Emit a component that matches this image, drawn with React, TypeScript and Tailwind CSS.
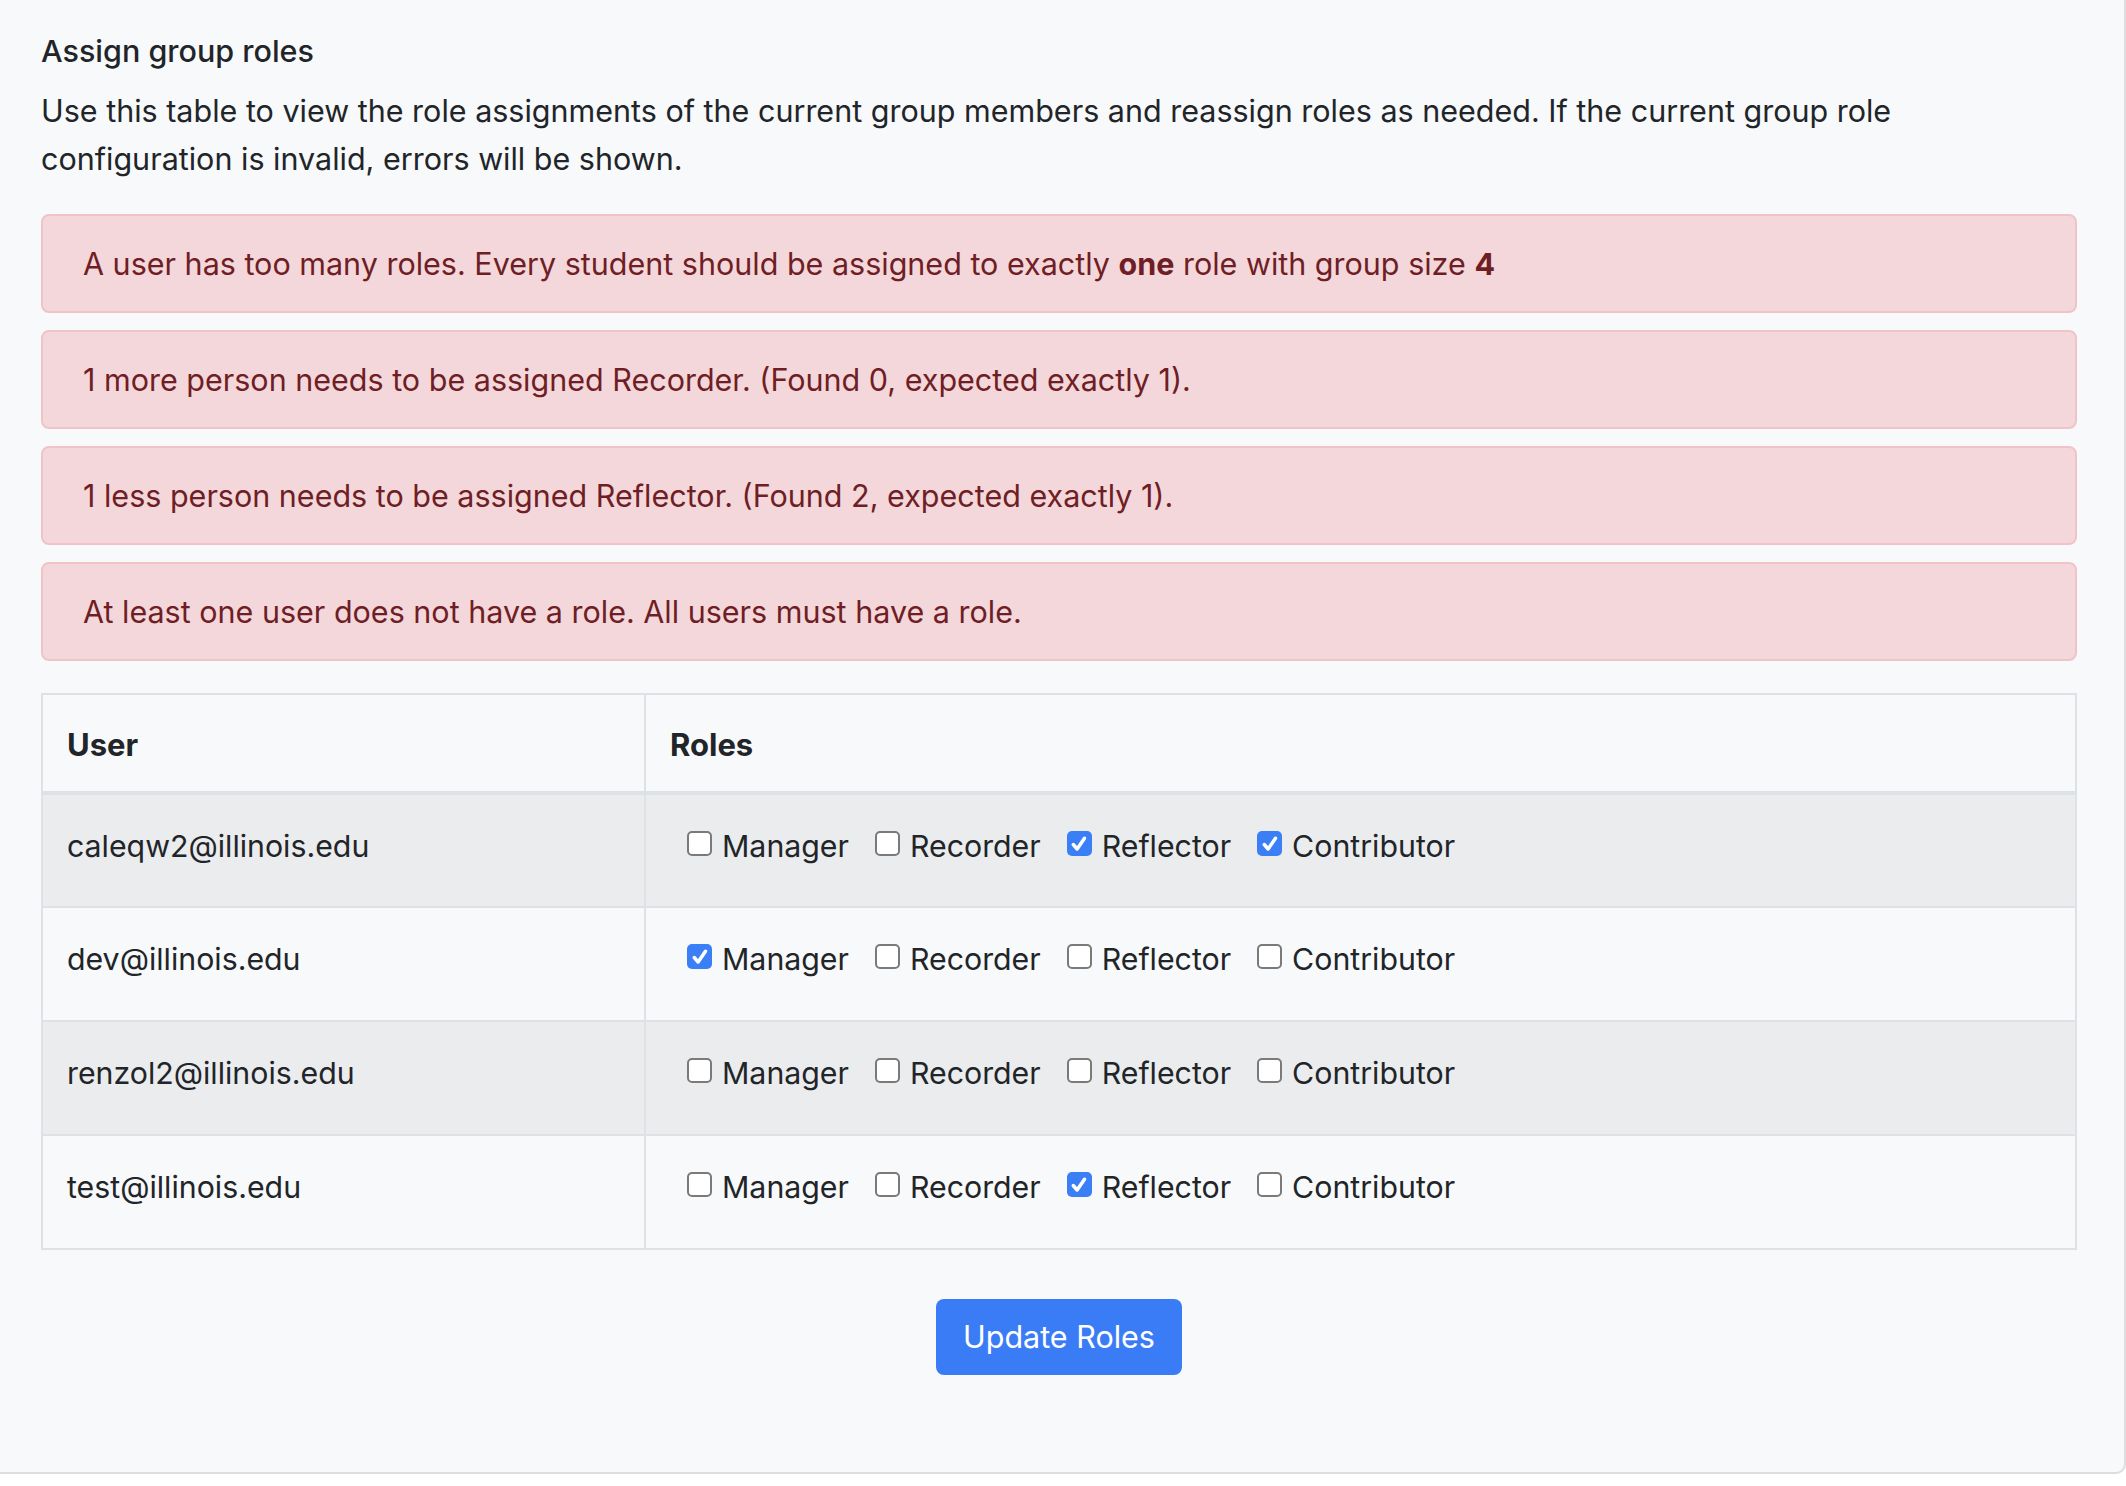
import React from "react";

const roles = ["Manager", "Recorder", "Reflector", "Contributor"];

const rows: { email: string; checked: boolean[] }[] = [
  { email: "caleqw2@illinois.edu", checked: [false, false, true, true] },
  { email: "dev@illinois.edu", checked: [true, false, false, false] },
  { email: "renzol2@illinois.edu", checked: [false, false, false, false] },
  { email: "test@illinois.edu", checked: [false, false, true, false] },
];

function Box({ checked }: { checked: boolean }) {
  if (checked) {
    return (
      <span className="mb-[5px] flex h-[25px] w-[25px] shrink-0 items-center justify-center rounded-[5px] bg-[#3a7ff6]">
        <svg width="20" height="20" viewBox="0 0 16 16" fill="none">
          <path d="M3.4 8.4 L6.5 12 L12.4 3.4" stroke="white" strokeWidth="2.8" strokeLinecap="round" strokeLinejoin="round" />
        </svg>
      </span>
    );
  }
  return (
    <span className="mb-[5px] block h-[25px] w-[25px] shrink-0 rounded-[5px] border-2 border-[#7a7a7a] bg-white" />
  );
}

function Alert({ children }: { children: React.ReactNode }) {
  return (
    <div className="flex h-[99px] items-center rounded-[8px] border-2 border-[#efc3c8] bg-[#f4d7da] pl-[40px] text-[#6f1e25]">
      {children}
    </div>
  );
}

export default function App() {
  return (
    <div
      className="min-h-[1486px] w-[2126px] bg-white text-[#212529]"
      style={{ fontFamily: "Inter, 'Noto Sans', sans-serif" }}
    >
      <div className="h-[1474px] w-[2126px] rounded-br-[10px] border-r-2 border-b-2 border-[#dcdde0] bg-[#f8f9fa] pl-[41px] pr-[47px] pt-[27px] text-[30.5px]">
        <div className="text-[30.5px] leading-[48px] font-medium">Assign group roles</div>
        <p className="mt-[12px] leading-[48px]">
          Use this table to view the role assignments of the current group members and reassign roles as needed. If the current group role
          <br />
          configuration is invalid, errors will be shown.
        </p>

        <div className="mt-[31px] flex flex-col gap-[17px] leading-[48px]">
          <Alert>
            <span>
              A user has too many roles. Every student should be assigned to exactly <b className="font-bold">one</b> role with group size{" "}
              <b className="font-bold">4</b>
            </span>
          </Alert>
          <Alert>1 more person needs to be assigned Recorder. (Found 0, expected exactly 1).</Alert>
          <Alert>1 less person needs to be assigned Reflector. (Found 2, expected exactly 1).</Alert>
          <Alert>At least one user does not have a role. All users must have a role.</Alert>
        </div>

        <table className="mt-[32px] w-[2036px] border-collapse border-2 border-[#dee2e6] text-[30.3px] leading-[48px]">
          <thead>
            <tr>
              <th className="h-[99px] w-[603px] border-2 border-b-4 border-[#dee2e6] px-[24px] pt-[26px] text-left align-top text-[31px] font-bold">
                User
              </th>
              <th className="h-[99px] border-2 border-b-4 border-[#dee2e6] px-[24px] pt-[26px] text-left align-top text-[31px] font-bold">
                Roles
              </th>
            </tr>
          </thead>
          <tbody>
            {rows.map((r, i) => (
              <tr key={r.email} className={i % 2 === 0 ? "bg-[#ebeced]" : "bg-[#f8f9fa]"}>
                <td className="h-[114px] border-2 border-[#dee2e6] px-[24px] pt-[27px] align-top">{r.email}</td>
                <td className="h-[114px] border-2 border-[#dee2e6] pl-[41px] pt-[27px] align-top">
                  <div className="flex items-center">
                    {roles.map((role, j) => (
                      <label key={role} className="mr-[26px] flex items-center gap-[10px]">
                        <Box checked={r.checked[j]} />
                        <span>{role}</span>
                      </label>
                    ))}
                  </div>
                </td>
              </tr>
            ))}
          </tbody>
        </table>

        <div className="mt-[49px] flex justify-center">
          <button className="flex h-[76px] w-[246px] items-center justify-center rounded-[8px] bg-[#3a7cf6] text-[30.5px] text-white">
            Update Roles
          </button>
        </div>
      </div>
    </div>
  );
}
